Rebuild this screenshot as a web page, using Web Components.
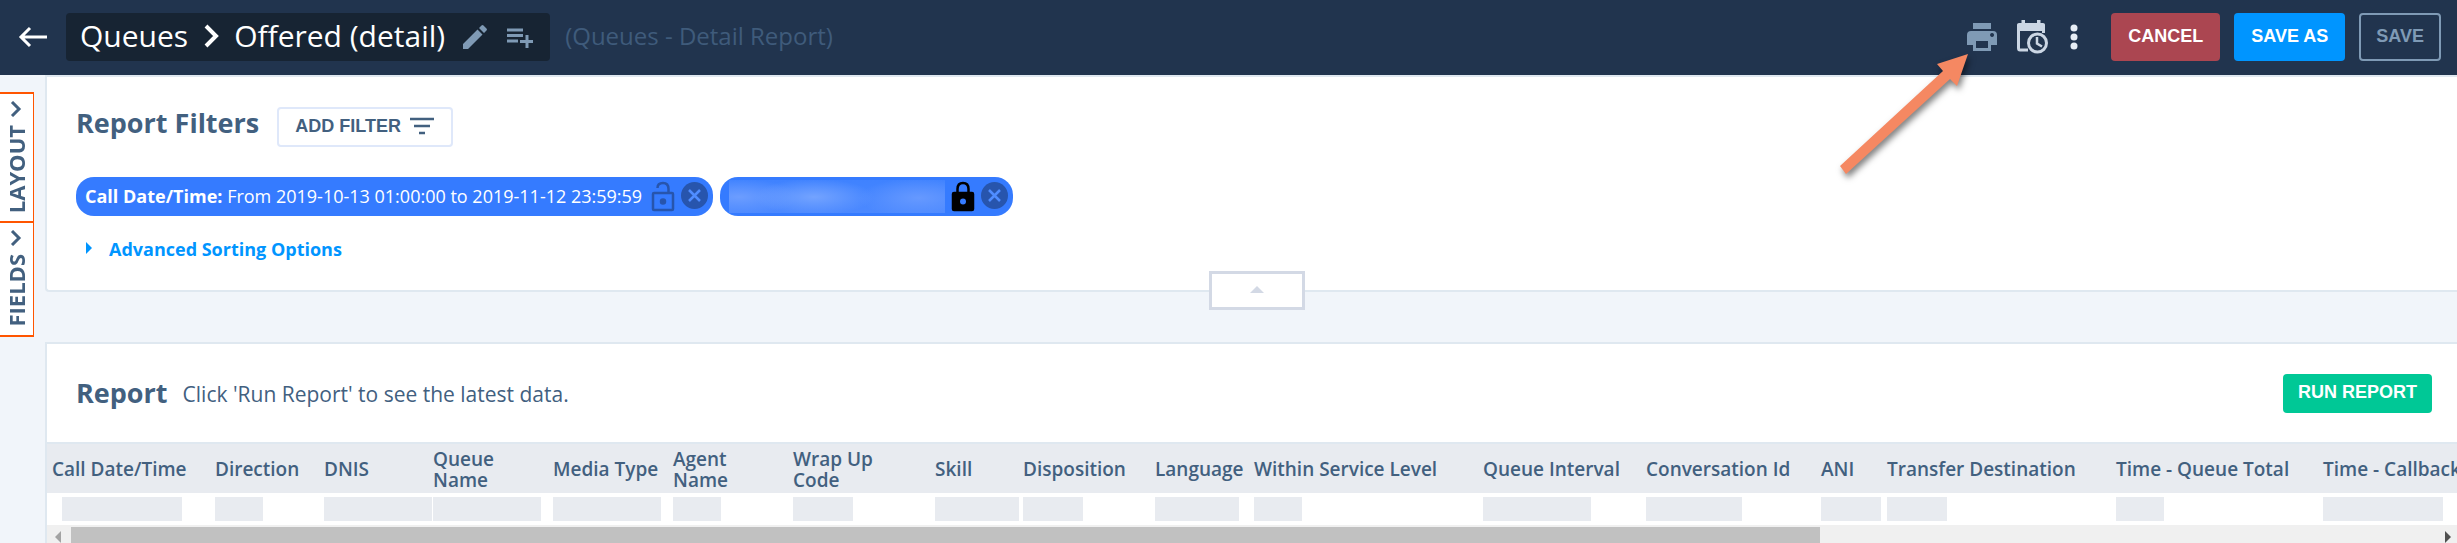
<!DOCTYPE html>
<html lang="en">
<head>
<meta charset="utf-8">
<title>Offered (detail)</title>
<style>
  body {
    margin: 0;
    min-height: 100vh;
    overflow: hidden;
    background: #f1f5fa;
    color: #42607f;
    font: 18px/24px "Open Sans", "Noto Sans", sans-serif;
  }
</style>
</head>
<body>
<report-app></report-app>
<script>
(() => {
  const define = (name, html, setup) => {
    const template = document.createElement('template');
    template.innerHTML = html;
    customElements.define(name, class extends HTMLElement {
      constructor() {
        super();
        this.attachShadow({ mode: 'open' }).appendChild(template.content.cloneNode(true));
      }
      connectedCallback() {
        if (setup) setup(this, this.shadowRoot);
      }
    });
  };

  define('action-button', `
    <style>
      :host { display: block; }
      button {
        display: flex; align-items: center; gap: 8px; box-sizing: border-box;
        height: var(--height, 48px); padding: 0 var(--pad, 17px) 2px; border: 0; border-radius: 4px;
        background: var(--bg, transparent); color: var(--fg, #fff);
        font: bold 18px/20px "Liberation Sans", Arial, sans-serif; white-space: nowrap; cursor: pointer;
      }
      :host([outline]) button { border: 2px solid var(--line); padding: 0 calc(var(--pad, 17px) - 2px) 2px; }
    </style>
    <button type="button"><slot></slot></button>
  `);

  define('icon-button', `
    <style>
      :host { display: block; }
      button { display: flex; padding: 0; border: 0; background: none; color: inherit; cursor: pointer; }
    </style>
    <button type="button"><slot></slot></button>
  `, (host, root) => {
    root.querySelector('button').setAttribute('aria-label', host.getAttribute('label'));
  });

  define('top-bar', `
    <style>
      :host { display: flex; align-items: center; height: 75px; box-sizing: border-box; padding: 0 16px 2px 17px; background: #21344e; }
      svg { display: block; }
      .title { display: flex; align-items: center; height: 48px; margin-left: 17px; padding: 0 17px 0 14px; border-radius: 4px; background: #172433; color: #7f9ab5; }
      h1 { display: flex; align-items: center; gap: 15px; margin: 0 17px 0 0; padding-bottom: 2px; color: #fff; font-size: 30px; line-height: 40px; font-weight: 400; white-space: nowrap; }
      .list { margin-left: 18px; }
      .sub { margin-left: 15px; padding-bottom: 2px; color: #3f5b7b; font-size: 24px; line-height: 32px; white-space: nowrap; }
      .icons { display: flex; align-items: center; gap: 16px; margin-left: auto; color: #cbd6e4; }
      .buttons { display: flex; gap: 14px; margin-left: 28px; }
      .back { color: #fff; }
      .print { color: #7f9ab5; }
      .cancel { --bg: #ab4651; }
      .saveas { --bg: #0095ff; }
      .save { --fg: #7f9ab5; --line: #7f9ab5; }
    </style>
    <icon-button class="back" label="Back"><svg width="32" height="24" viewBox="0 0 32 24" fill="none" stroke="currentColor" stroke-width="3"><path d="M30 12H4M13 3L4 12l9 9"/></svg></icon-button>
    <div class="title">
      <h1><span>Queues</span><svg width="16" height="24" viewBox="0 0 16 24" fill="none" stroke="currentColor" stroke-width="4"><path d="M3 2l10 10L3 22"/></svg><span>Offered (detail)</span></h1>
      <icon-button label="Rename"><svg width="26" height="26" viewBox="0 0 26 26" fill="currentColor"><path d="M1 20L15.500 5.500l5 5L6 25H1zM17 4l2.500-2.500q1-1 2 0l3 3q1 1 0 2L22 9z"/></svg></icon-button>
      <icon-button class="list" label="Add to list"><svg width="27" height="24" viewBox="0 0 27 24" fill="none" stroke="currentColor" stroke-width="3"><path d="M1 5h16M1 10.500h16M1 16h11M21 10v13M14 16.500h13"/></svg></icon-button>
    </div>
    <div class="sub">(Queues - Detail Report)</div>
    <div class="icons">
      <icon-button class="print" label="Print"><svg width="34" height="32" viewBox="0 0 34 32" fill="currentColor"><path d="M8 2h18v6H8zM6 10h22q4 0 4 4v10h-6v6H8v-6H2V14q0-4 4-4zm5 10v7h12v-7zM27 12a2 2 0 1 0 .1 0z" fill-rule="evenodd"/></svg></icon-button>
      <icon-button label="Schedule"><svg width="34" height="36" viewBox="0 0 34 36" fill="none" stroke="currentColor"><path d="M13 31H5q-1.500 0-1.500-2V7h25v7" stroke-width="3"/><path d="M4 4h24q2 0 2 2v6H2V6q0-2 2-2zM6.500 1h3.500v4H6.500zM22 1h3.500v4H22z" fill="currentColor" stroke="none"/><circle cx="22.500" cy="24" r="9" stroke-width="3"/><path d="M22 18v6.500l5 3" stroke-width="2.500"/></svg></icon-button>
      <icon-button label="More"><svg width="18" height="28" viewBox="0 0 18 28" fill="#e6edf5"><circle cx="9" cy="5" r="3.500"/><circle cx="9" cy="14" r="3.500"/><circle cx="9" cy="23" r="3.500"/></svg></icon-button>
    </div>
    <div class="buttons">
      <action-button class="cancel">CANCEL</action-button>
      <action-button class="saveas">SAVE AS</action-button>
      <action-button class="save" outline>SAVE</action-button>
    </div>
  `);

  define('side-tab', `
    <style>
      :host { display: block; }
      button {
        display: flex; flex-direction: column; align-items: center; gap: 8px; box-sizing: border-box;
        width: 34px; padding: 7px 2px 8px 0; border: solid #ff5500; border-width: 2px 1px 0 0;
        background: #fff; color: #42607f; font: bold 22px/30px "Open Sans", sans-serif; cursor: pointer;
      }
      :host([last]) button { border-bottom-width: 2px; }
      span { writing-mode: vertical-rl; transform: rotate(180deg); }
    </style>
    <button type="button">
      <svg width="12" height="16" viewBox="0 0 12 16" fill="none" stroke="currentColor" stroke-width="3"><path d="M2 1l7 7-7 7"/></svg>
      <span><slot></slot></span>
    </button>
  `);

  define('filter-pill', `
    <style>
      :host { display: flex; align-items: center; height: 39px; box-sizing: border-box; padding: 0 5px 0 9px; border-radius: 18px; background: #357bff; color: #fff; white-space: nowrap; }
      .lock { margin-left: 7px; color: #2755ad; }
      :host([locked]) .lock { margin-left: 4px; color: #000; }
      .remove { margin-left: 4px; }
      svg { display: block; }
      .open, .shut { fill: none; stroke: currentColor; stroke-width: 2.500; }
      :host([locked]) .open, :host(:not([locked])) .shut { display: none; }
    </style>
    <slot></slot>
    <icon-button class="lock" label="Lock filter"><svg width="28" height="32" viewBox="0 0 28 32">
      <g class="open"><rect x="4" y="12" width="20" height="17" rx="1"/><path d="M8.500 7q0-5 5.500-5t5.500 6v4"/><circle cx="14" cy="20.500" r="2" fill="currentColor"/></g>
      <g class="shut"><rect x="4" y="12" width="20" height="17" rx="1" fill="currentColor"/><path d="M8.500 12V8q0-6 5.500-6t5.500 6v4"/><circle cx="14" cy="20.500" r="3" fill="#357bff" stroke="none"/></g>
    </svg></icon-button>
    <icon-button class="remove" label="Remove filter"><svg width="27" height="32" viewBox="0 0 27 32"><circle cx="13.500" cy="14.500" r="13.500" fill="#2755ad"/><path d="M8 9l11 11M19 9L8 20" stroke="#4f8dff" stroke-width="2.500"/></svg></icon-button>
  `);

  define('filter-panel', `
    <style>
      :host { display: block; position: relative; box-sizing: border-box; padding: 30px 25px 29px 29px; background: #fff; border: solid #dfe8f0; border-width: 2px 0 2px 2px; border-radius: 0 0 0 4px; }
      .head { display: flex; align-items: center; gap: 18px; height: 40px; }
      h2 { margin: 0; font-size: 27px; line-height: 36px; font-weight: 700; padding-bottom: 8px; }
      .add { --height: 40px; --pad: 18px; --fg: #42607f; --line: #dfe8fa; }
      .pills { display: flex; gap: 7px; margin-top: 30px; }
      .pills span { padding-bottom: 2px; }
      .redacted {
        width: 216px; height: 33px;
        background:
          radial-gradient(60px 18px at 85px 17px, #73a3ff, transparent),
          radial-gradient(60px 18px at 10px 17px, #6c9dff, transparent),
          radial-gradient(60px 20px at 190px 18px, #6699ff, transparent),
          linear-gradient(#3f82ff, #4c89ff);
      }
      details { margin-top: 21px; }
      summary { display: flex; align-items: center; gap: 17px; padding-left: 10px; color: #0095ff; font-weight: 700; line-height: 24px; list-style: none; cursor: pointer; }
      summary svg { padding-bottom: 3px; }
      .fold { position: absolute; left: 50%; top: calc(100% - 19px); width: 96px; height: 39px; margin-left: -43px; padding: 0; border: 3px solid #d3d9e5; background: #fff; z-index: 1; }
      .fold svg { display: block; margin: 0 auto 2px; }
    </style>
    <div class="head">
      <h2>Report Filters</h2>
      <action-button class="add" outline>ADD FILTER <svg width="26" height="18" viewBox="0 0 26 18" stroke="#42607f" stroke-width="2.500"><path d="M1 2h24M5 9h16M10 16h6"/></svg></action-button>
    </div>
    <div class="pills">
      <filter-pill><span><b>Call Date/Time:</b> From 2019-10-13 01:00:00 to 2019-11-12 23:59:59</span></filter-pill>
      <filter-pill locked><div class="redacted"></div></filter-pill>
    </div>
    <details>
      <summary><svg width="6" height="12" viewBox="0 0 6 12" fill="currentColor"><path d="M0 0l6 6-6 6z"/></svg>Advanced Sorting Options</summary>
    </details>
    <button class="fold" type="button" aria-label="Collapse filters"><svg width="14" height="7" viewBox="0 0 14 7" fill="#d3d9e5"><path d="M7 0l7 7H0z"/></svg></button>
  `);

  // [heading, column width, placeholder width]
  const columns = [
    ['Call Date/Time', 168, 120],
    ['Direction', 109, 48],
    ['DNIS', 109, 108],
    ['Queue<br>Name', 120, 108],
    ['Media Type', 120, 108],
    ['Agent<br>Name', 120, 48],
    ['Wrap Up<br>Code', 142, 60],
    ['Skill', 88, 84],
    ['Disposition', 132, 60],
    ['Language', 99, 84],
    ['Within Service Level', 229, 48],
    ['Queue Interval', 163, 108],
    ['Conversation Id', 175, 96],
    ['ANI', 66, 60],
    ['Transfer Destination', 229, 60],
    ['Time - Queue Total', 207, 48],
    ['Time - Callback', 240, 120]
  ];

  define('report-table', `
    <style>
      :host { display: block; border-top: 2px solid #dfe8f0; }
      .view { overflow: hidden; }
      table { width: 2516px; table-layout: fixed; border-collapse: collapse; }
      th { height: 49px; padding: 2px 0 0; box-sizing: border-box; background: #e8ebf0; font-weight: 600; font-size: 19px; line-height: 21px; text-align: left; white-space: nowrap; }
      td { height: 32px; padding: 0; background: #fff; }
      th:first-child { padding-left: 5px; }
      td:first-child { padding-left: 15px; }
      td div { height: 24px; background: #e8ebf0; }
      .scroll { display: flex; align-items: center; gap: 10px; height: 18px; padding: 0 6px 0 8px; background: #f0f0f0; overflow: hidden; }
      .track { flex: 1; align-self: stretch; padding-top: 2px; }
      .thumb { width: 74%; height: 16px; background: #c1c1c1; }
      svg { display: block; margin-top: 6px; }
    </style>
    <div class="view"><table>
      <colgroup></colgroup>
      <thead><tr></tr></thead>
      <tbody><tr></tr></tbody>
    </table></div>
    <div class="scroll">
      <svg width="6" height="12" viewBox="0 0 6 12" fill="#a3a3a3"><path d="M6 0L0 6l6 6z"/></svg>
      <div class="track"><div class="thumb"></div></div>
      <svg width="6" height="12" viewBox="0 0 6 12" fill="#505050"><path d="M0 0l6 6-6 6z"/></svg>
    </div>
  `, (host, root) => {
    root.querySelector('colgroup').innerHTML = columns.map(c => `<col style="width:${c[1]}px">`).join('');
    root.querySelector('thead tr').innerHTML = columns.map(c => `<th scope="col">${c[0]}</th>`).join('');
    root.querySelector('tbody tr').innerHTML = columns.map(c => `<td><div style="width:${c[2]}px"></div></td>`).join('');
  });

  define('report-panel', `
    <style>
      :host { display: block; margin-top: 50px; background: #fff; border: solid #dfe8f0; border-width: 2px 0 0 2px; }
      .head { display: flex; align-items: center; height: 98px; padding: 0 25px 0 29px; }
      h2 { margin: 0 15px 0 0; font-size: 27px; line-height: 36px; font-weight: 700; }
      p { margin: 0; padding-top: 2px; font-size: 21px; line-height: 32px; }
      .run { margin-left: auto; --height: 39px; --pad: 15px; --bg: #00c896; }
    </style>
    <div class="head">
      <h2>Report</h2>
      <p>Click 'Run Report' to see the latest data.</p>
      <action-button class="run">RUN REPORT</action-button>
    </div>
    <report-table></report-table>
  `);

  define('report-app', `
    <style>
      :host { display: block; }
      .body { display: flex; gap: 11px; }
      nav { padding-top: 17px; }
      main { flex: 1; min-width: 0; }
      .pointer { position: absolute; right: 480px; top: 45px; filter: drop-shadow(2px 4px 3px rgba(0, 0, 0, .5)); }
    </style>
    <top-bar></top-bar>
    <div class="body">
      <nav><side-tab>LAYOUT</side-tab><side-tab last>FIELDS</side-tab></nav>
      <main>
        <filter-panel></filter-panel>
        <report-panel></report-panel>
      </main>
    </div>
    <svg class="pointer" width="147" height="140" viewBox="1830 45 147 140" fill="#f58862"><path d="M1968 54l-11 32-7-7-104 95-6-8 103-95-6-7z"/></svg>
  `);
})();
</script>
</body>
</html>
